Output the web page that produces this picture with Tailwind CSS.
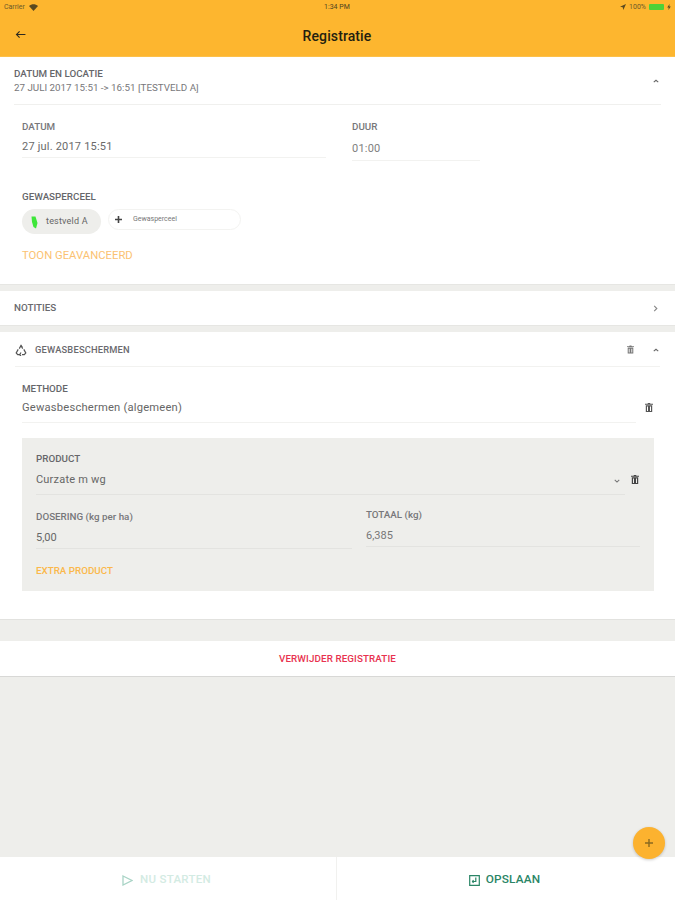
<!DOCTYPE html>
<html>
<head>
<meta charset="utf-8">
<script src="https://cdn.jsdelivr.net/npm/@tailwindcss/browser@4"></script>
</head>
<body class="bg-[#eeeeeb]">
<div class="relative w-[675px] h-[900px] overflow-hidden flex flex-col bg-[#eeeeeb] font-['Roboto',sans-serif] text-[#4a4a4a]">
  <header class="h-[57px] shrink-0 bg-[#fdb62f] border-b border-[#fcc04a] flex flex-col">
    <div class="h-[14px] relative flex items-center justify-between px-1 text-[7px] text-[#6b5a2a]">
      <div class="flex items-center gap-1"><span>Carrier</span>
        <svg width="9" height="7" viewBox="0 0 24 18"><path fill="#5a4a20" d="M12 18 0 5c7-6.500 17-6.500 24 0z"/></svg>
      </div>
      <span class="absolute left-[324px] text-[#4f4320]">1:34 PM</span>
      <div class="flex items-center gap-[3px]">
        <svg width="6" height="6" viewBox="0 0 10 10"><path fill="#5a4a20" d="M10 0 0 4.500l4.500 1L5.500 10z"/></svg>
        <span>100%</span>
        <span class="w-[15px] h-[6px] bg-[#4cd137] rounded-[1px]"></span>
        <svg width="4" height="6" viewBox="0 0 6 10"><path fill="#5a4a20" d="M4 0 0 6h2.500L2 10l4-6H3.500z"/></svg>
      </div>
    </div>
    <div class="relative flex-1 flex items-center justify-center pt-[2px]">
      <svg class="absolute left-[15px] top-[16px]" width="11" height="9" viewBox="0 0 12 10" fill="none" stroke="#2d2a20" stroke-width="1.200"><path d="M11.500 5H1.500M5 1.500 1.500 5 5 8.500"/></svg>
      <h1 class="text-[14px] font-medium text-[#241f10] tracking-[0.1px] -ml-[1px]">Registratie</h1>
    </div>
  </header>

  <section class="h-[227px] shrink-0 bg-white flex flex-col">
    <div class="mx-[14px] h-[48px] border-b border-[#f0f0ee] flex items-center justify-between pt-[1px]">
      <div class="flex flex-col text-[9.800px] leading-[14px]">
        <span class="font-medium text-[#66666a]">DATUM EN LOCATIE</span>
        <span class="text-[#77777a]">27 JULI 2017 15:51 -&gt; 16:51 [TESTVELD A]</span>
      </div>
      <svg class="mr-[2px]" width="6" height="4" viewBox="0 0 8 5" fill="none" stroke="#666" stroke-width="1.400"><path d="M1 4 4 1.500 7 4"/></svg>
    </div>
    <div class="flex pl-[22px] mt-[16px]">
      <div class="w-[304px] mr-[26px]">
        <div class="text-[9.800px] font-medium text-[#77777a] leading-[11px]">DATUM</div>
        <div class="text-[11px] text-[#6a6a6a] mt-[6px] h-[20px] pt-[1px] border-b border-[#f2f2f0] tracking-[0.2px]">27 jul. 2017 15:51</div>
      </div>
      <div class="w-[128px]">
        <div class="text-[9.800px] font-medium text-[#77777a] leading-[11px]">DUUR</div>
        <div class="text-[11px] text-[#808080] mt-[8px] h-[21px] border-b border-[#f2f2f0] tracking-[0.2px] pt-[1px]">01:00</div>
      </div>
    </div>
    <div class="pl-[22px] mt-[30px] text-[9.800px] font-medium text-[#66666a] leading-[11px]">GEWASPERCEEL</div>
    <div class="pl-[22px] mt-[7px] flex items-start gap-[7px]">
      <div class="w-[79px] h-[25px] rounded-full bg-[#eeeeeb] flex items-center pl-[9px] gap-[8px] pt-[1px] text-[9px] text-[#666]">
        <svg width="7" height="13" viewBox="0 0 7 13"><path fill="#3ee63a" d="M.5.500 4.500.500 6.500 7 5 12.500 2.500 11 1 6z"/></svg>
        <span class="tracking-[0.2px]">testveld A</span>
      </div>
      <div class="w-[133px] h-[21px] rounded-full bg-white border border-[#f3f3f1] flex items-center pl-[6px] gap-[11px] text-[7px] text-[#777]">
        <svg width="7" height="7" viewBox="0 0 7 7" fill="#444"><path d="M2.700 0h1.600v2.700H7v1.600H4.300V7H2.700V4.300H0V2.700h2.700z"/></svg>
        <span>Gewasperceel</span>
      </div>
    </div>
    <div class="pl-[22px] mt-[15px] text-[11.300px] text-[#fbc272] leading-[13px]">TOON GEAVANCEERD</div>
  </section>

  <div class="h-[7px] shrink-0 border-t border-[#e6e6e3]"></div>

  <section class="h-[34px] shrink-0 bg-white flex items-center justify-between pl-[14px] pr-[17px]">
    <span class="text-[9.800px] font-medium text-[#6a6a6e]">NOTITIES</span>
    <svg width="5" height="7" viewBox="0 0 5 8" fill="none" stroke="#888" stroke-width="1.300"><path d="M1 1l3 3-3 3"/></svg>
  </section>

  <div class="h-[7px] shrink-0 border-t border-[#e6e6e3]"></div>

  <section class="h-[287px] shrink-0 bg-white flex flex-col">
    <div class="mx-[15px] h-[35px] shrink-0 border-b border-[#f2f2f0] flex items-center justify-between pr-[1px] pt-[1px]">
      <div class="flex items-center gap-[8px]">
        <svg width="12" height="12" viewBox="0 0 12 12" fill="none" stroke="#555" stroke-width="1.200"><path d="M4.300 4.600 6 1.500 7.700 4.600M8.800 5.400 10.800 9 9.300 10.700H7M5 10.700H2.700L1.200 9 3.200 5.400"/><path d="M6 8.500 4.700 10.700 6 12M7.200 3 6 1.500"/></svg>
        <span class="text-[9.300px] font-medium text-[#6a6a6e] tracking-[0.2px]">GEWASBESCHERMEN</span>
      </div>
      <div class="flex items-center gap-[19px]">
        <svg width="7" height="9" viewBox="0 0 8 9" fill="#777"><path d="M3 0h2l.5.700H8V1.700H0V.700h2.500zM.8 2.300h6.400V9H.8zM2 3.500V8h1V3.500zM5 3.500V8h1V3.500z"/></svg>
        <svg width="6" height="4" viewBox="0 0 8 5" fill="none" stroke="#666" stroke-width="1.400"><path d="M1 4 4 1.500 7 4"/></svg>
      </div>
    </div>
    <div class="pl-[22px] mt-[16px] text-[9.800px] font-medium text-[#66666a] leading-[11px]">METHODE</div>
    <div class="ml-[22px] mr-[18px] flex items-start">
      <div class="w-[614px] h-[29px] shrink-0 border-b border-[#f2f2f0] text-[11.200px] text-[#666] pt-[6px] tracking-[0.2px]">Gewasbeschermen (algemeen)</div>
      <svg class="ml-[9px] mt-[9px]" width="8" height="9" viewBox="0 0 8 9" fill="#555"><path d="M3 0h2l.5.700H8V1.700H0V.700h2.500zM.8 2.300h6.400V9H.8zM2 3.500V8h1V3.500zM5 3.500V8h1V3.500z"/></svg>
    </div>
    <div class="ml-[22px] mr-[21px] mt-[15px] h-[153px] bg-[#eeeeeb] px-[14px] pt-[15px] flex flex-col">
      <div class="text-[9.800px] font-medium text-[#66666a] leading-[11px]">PRODUCT</div>
      <div class="flex items-start">
        <div class="w-[589px] h-[31px] shrink-0 border-b border-[#e3e3e0] flex items-center justify-between text-[11px] text-[#666] pt-[3px] pr-[5px] tracking-[0.2px]">
          <span>Curzate m wg</span>
          <svg width="6" height="4" viewBox="0 0 8 5" fill="none" stroke="#777" stroke-width="1.400"><path d="M1 1 4 4 7 1"/></svg>
        </div>
        <svg class="ml-[6px] mt-[11px]" width="8" height="9" viewBox="0 0 8 9" fill="#444"><path d="M3 0h2l.5.700H8V1.700H0V.700h2.500zM.8 2.300h6.400V9H.8zM2 3.500V8h1V3.500zM5 3.500V8h1V3.500z"/></svg>
      </div>
      <div class="flex mt-[16px]">
        <div class="w-[316px] mr-[14px]">
          <div class="text-[9.800px] font-medium text-[#77777a] leading-[11px]">DOSERING (kg per ha)</div>
          <div class="h-[27px] border-b border-[#e3e3e0] text-[11px] text-[#666] pt-[8px]">5,00</div>
        </div>
        <div class="w-[274px] -mt-[2px]">
          <div class="text-[9.800px] font-medium text-[#77777a] leading-[11px]">TOTAAL (kg)</div>
          <div class="h-[27px] border-b border-[#e3e3e0] text-[11px] text-[#777] pt-[8px]">6,385</div>
        </div>
      </div>
      <div class="mt-[16px] text-[9.800px] font-medium text-[#fbb84a] leading-[11px]">EXTRA PRODUCT</div>
    </div>
  </section>

  <div class="h-[22px] shrink-0 border-t border-[#e2e2df]"></div>

  <div class="h-[36px] shrink-0 bg-white border-b border-[#d8d8d6] flex items-center justify-center text-[9.800px] font-medium text-[#e8324f] tracking-[0.1px] pt-[1px]">VERWIJDER REGISTRATIE</div>

  <div class="flex-1"></div>

  <footer class="h-[43px] shrink-0 bg-white flex">
    <div class="w-[337px] border-r border-[#f1f1ef] flex items-center justify-center gap-[7px] pt-[3px] pr-[3px] text-[11.500px] text-[#d3ebe3] font-medium tracking-[0.3px]">
      <svg width="11" height="11" viewBox="0 0 11 11" fill="none" stroke="#a9d4c6" stroke-width="1.300"><path d="M1 1 10 5.500 1 10z"/></svg>
      <span>NU STARTEN</span>
    </div>
    <div class="flex-1 flex items-center justify-center gap-[6px] pt-[3px] pr-[3px] text-[11.800px] text-[#2a8566] font-medium tracking-[0.2px]">
      <svg width="11" height="11" viewBox="0 0 11 11" fill="none" stroke="#2a8566" stroke-width="1.200"><path d="M.7.7h9.600v9.600H.7zM6.800 2.500V6.500H4M4.500 5 3.500 6.500 4.500 8"/></svg>
      <span>OPSLAAN</span>
    </div>
  </footer>

  <button class="absolute left-[633px] top-[827px] w-[32px] h-[32px] rounded-full bg-[#fcb22f] shadow-[0_1px_3px_rgba(0,0,0,0.2)] flex items-center justify-center">
    <svg width="8" height="8" viewBox="0 0 8 8" fill="#8a6a20"><path d="M3.300 0h1.400v3.300H8v1.400H4.700V8H3.300V4.700H0V3.300h3.300z"/></svg>
  </button>
</div>
</body>
</html>
